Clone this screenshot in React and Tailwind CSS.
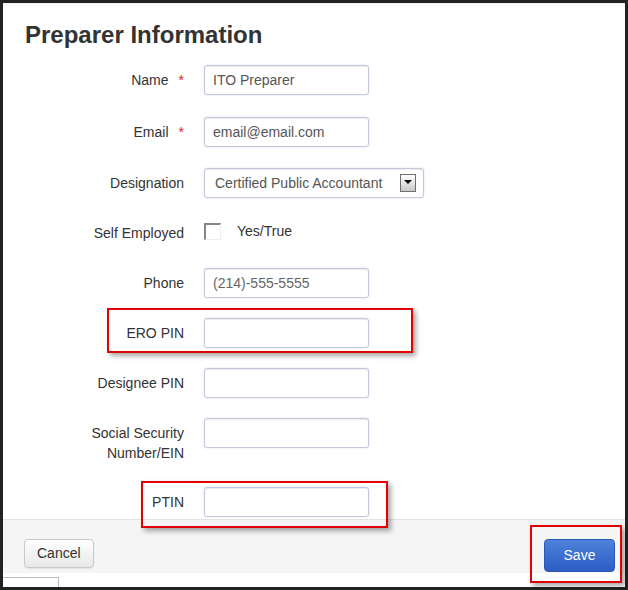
import { useState } from 'react'

const inputCls =
  'h-[30px] w-[165px] rounded-[3px] border border-[#c3c9d9] bg-white px-[8px] text-[14px] text-[#555] outline-none shadow-[inset_0_1px_1px_rgba(0,0,0,0.08),0_0_2px_rgba(82,130,236,0.25)] placeholder:text-[#666]'

function Row({ label, required, children, className = '', tall }) {
  return (
    <div className={`flex ${className}`}>
      <div
        className={`flex w-[181px] shrink-0 justify-end text-right text-[14px] leading-[20px] text-[#333] ${
          tall ? 'pt-[5px] pb-[5px]' : 'items-center'
        }`}
      >
        <span>{label}</span>
        {required && <span className="ml-[10px] text-[#e21b1b]">*</span>}
      </div>
      <div className="ml-[20px] flex">{children}</div>
    </div>
  )
}

export default function App() {
  const [selfEmployed, setSelfEmployed] = useState(false)

  return (
    <div
      className="relative h-[590px] w-[628px] bg-[#222] p-[3px]"
      style={{ fontFamily: '"Liberation Sans", Arial, sans-serif' }}
    >
      <div className="flex h-full flex-col bg-white shadow-[inset_0_5px_5px_-3px_rgba(0,0,0,0.05)]">
        <div className="flex-1">
          <h1 className="mt-[17px] pl-[22px] text-[24px] font-bold leading-[30px] text-[#333]">
            Preparer Information
          </h1>

          <div className="mt-[15px]">
            <Row label="Name" required className="mb-[22px]">
              <input className={inputCls} defaultValue="ITO Preparer" />
            </Row>
            <Row label="Email" required className="mb-[21px]">
              <input className={inputCls} defaultValue="email@email.com" />
            </Row>
            <Row label="Designation" className="mb-[20px]">
              <div className="relative flex h-[30px] w-[220px] items-center rounded-[3px] border border-[#c3c9d9] bg-white pl-[10px] text-[14px] text-[#555] shadow-[inset_0_1px_1px_rgba(0,0,0,0.08),0_0_2px_rgba(82,130,236,0.25)]">
                Certified Public Accountant
                <div className="absolute right-[7px] top-[5px] flex h-[18px] w-[16px] justify-center border border-[#6e6e6e] bg-gradient-to-b from-white to-[#c8c8c8] pt-[5px]">
                  <div className="h-0 w-0 border-x-[4px] border-t-[4px] border-x-transparent border-t-black" />
                </div>
              </div>
            </Row>
            <Row label="Self Employed" className="mb-[20px] h-[30px]">
              <label className="flex cursor-pointer items-start pt-[4px]">
                <button
                  type="button"
                  onClick={() => setSelfEmployed(!selfEmployed)}
                  className="mt-[1px] flex h-[17px] w-[17px] items-center justify-center border-l-2 border-t-2 border-r border-b border-l-[#858585] border-t-[#858585] border-r-[#eee] border-b-[#eee] bg-white text-[11px] leading-none text-[#333]"
                >
                  {selfEmployed ? '✓' : ''}
                </button>
                <span className="ml-[16px] text-[14px] leading-[18px] text-[#333]">Yes/True</span>
              </label>
            </Row>
            <Row label="Phone" className="mb-[20px]">
              <input className={inputCls} placeholder="(214)-555-5555" />
            </Row>
            <Row label="ERO PIN" className="mb-[20px]">
              <input className={inputCls} />
            </Row>
            <Row label="Designee PIN" className="mb-[20px]">
              <input className={inputCls} />
            </Row>
            <Row label={<>Social Security<br />Number/EIN</>} tall className="mb-[19px]">
              <input className={inputCls} />
            </Row>
            <Row label="PTIN">
              <input className={inputCls} />
            </Row>
          </div>
        </div>

        <div className="flex h-[54px] items-start justify-between border-t border-[#e3e3e3] bg-[#f5f5f5] pl-[21px] pr-[10px] pt-[19px]">
          <button className="h-[29px] rounded-[4px] border border-[#c8c8c8] bg-gradient-to-b from-white to-[#e8e8e8] px-[12px] text-[14px] text-[#333] shadow-[0_1px_1px_rgba(0,0,0,0.08)]">
            Cancel
          </button>
          <button className="h-[33px] w-[71px] rounded-[4px] border border-[#2c58b8] bg-gradient-to-b from-[#4f82db] to-[#2c5cc4] text-[14px] text-white">
            Save
          </button>
        </div>

        <div className="relative h-[14px] bg-white">
          <div className="absolute bottom-0 left-0 h-[10px] w-[56px] overflow-hidden border-r border-t border-[#bdbdbd] bg-white" />
        </div>
      </div>

      <div className="pointer-events-none absolute left-[107px] top-[308px] h-[45px] w-[306px] border-2 border-[#e30000] shadow-[3px_3px_5px_rgba(0,0,0,0.35)]" />
      <div className="pointer-events-none absolute left-[141px] top-[481px] h-[47px] w-[247px] border-2 border-[#e30000] shadow-[3px_3px_5px_rgba(0,0,0,0.35)]" />
      <div className="pointer-events-none absolute left-[530px] top-[525px] h-[58px] w-[92px] border-2 border-[#e30000] shadow-[3px_3px_5px_rgba(0,0,0,0.35)]" />
    </div>
  )
}
